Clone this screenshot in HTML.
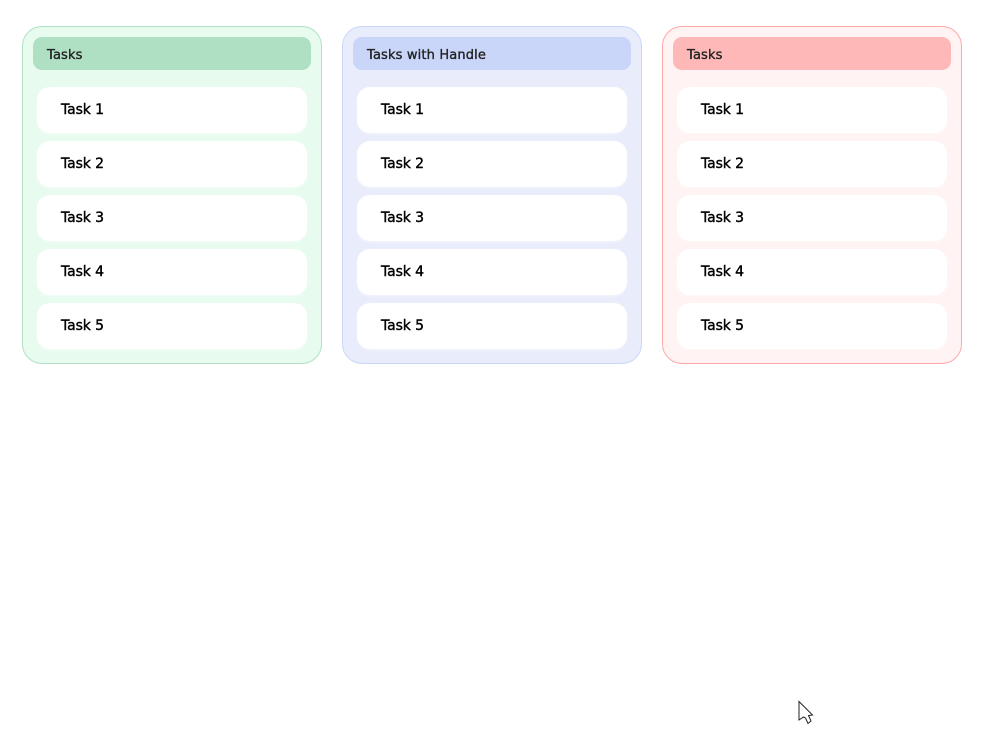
<!DOCTYPE html>
<html>
<head>
<meta charset="utf-8">
<style>
html,body{margin:0;padding:0;background:#fff;width:987px;height:756px;overflow:hidden;font-family:"DejaVu Sans","Liberation Sans",sans-serif;}
.panel{position:absolute;top:26px;width:300px;height:338px;box-sizing:border-box;border:1px solid;border-radius:20px;}
.head{position:absolute;left:10px;top:10px;width:278px;height:33px;border-radius:9px;line-height:37px;font-size:13px;color:#222;text-indent:14px;letter-spacing:.15px;white-space:nowrap;-webkit-text-stroke:.35px #222;}
.item{position:absolute;left:14px;width:270px;height:46px;border-radius:13px;background:#fff;line-height:47px;font-size:14px;color:#000;text-indent:24px;letter-spacing:-.1px;-webkit-text-stroke:.4px #000;box-shadow:0 1px 2px rgba(255,255,255,.5);}
.g{left:22px;background:#e8fbef;border-color:#b0e0c4;}.g .head{background:#b0e0c4;}
.b{left:342px;background:#e9edfb;border-color:#c9d6fa;}.b .head{background:#c9d6fa;}
.r{left:662px;background:#fff3f3;border-color:#ffa8a8;}.r .head{background:#ffb8b8;}
.i1{top:60px}.i2{top:114px}.i3{top:168px}.i4{top:222px}.i5{top:276px}
svg{position:absolute;left:798px;top:700px}
</style>
</head>
<body>
<div class="panel g"><div class="head">Tasks</div><div class="item i1">Task 1</div><div class="item i2">Task 2</div><div class="item i3">Task 3</div><div class="item i4">Task 4</div><div class="item i5">Task 5</div></div>
<div class="panel b"><div class="head">Tasks with Handle</div><div class="item i1">Task 1</div><div class="item i2">Task 2</div><div class="item i3">Task 3</div><div class="item i4">Task 4</div><div class="item i5">Task 5</div></div>
<div class="panel r"><div class="head">Tasks</div><div class="item i1">Task 1</div><div class="item i2">Task 2</div><div class="item i3">Task 3</div><div class="item i4">Task 4</div><div class="item i5">Task 5</div></div>
<svg width="16" height="25" viewBox="0 0 16 25"><path d="M1 1.5 L14.5 15 L10.5 15.5 L13 21 L10 23.5 L7.5 18 L5.5 17 L1 20 Z" fill="#fff" stroke="#222" stroke-width="1"/></svg>
</body>
</html>
